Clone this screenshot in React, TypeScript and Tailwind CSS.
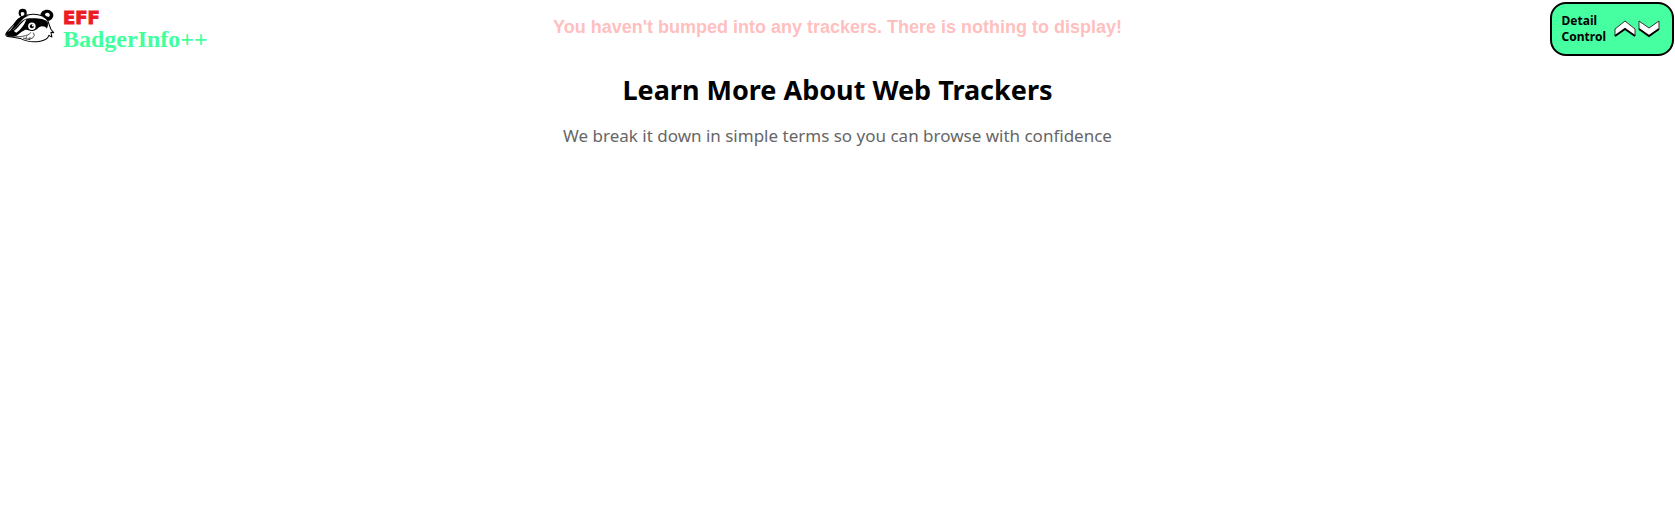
import React from "react";

function BadgerLogo() {
  return (
    <svg viewBox="12 24 150 102" className="h-[35px] w-[51px] shrink-0" aria-hidden="true">
      <circle cx="67" cy="38" r="12" fill="#000" />
      <path d="M61 38q5-6 11 0l-1 9-8 2z" fill="#fff" />
      <path d="M119 46c0-15 19-22 31-14s9 24-8 30z" fill="#000" />
      <path d="M132 42q8-8 14-1 3 6-3 9l-8-3z" fill="#fff" />
      <path
        d="M17 101C22 88 36 80 45 66 56 51 74 43 96 42c22-1 40 8 46 22 3 9 5 15 8 22l8 10-8-1 3 14-9-5c-3 10-14 15-25 17-20 4-43 1-59-8L34 109c-10 0-17-2-17-8z"
        fill="#fff"
        stroke="#000"
        strokeWidth="3"
        strokeLinejoin="round"
      />
      <path d="M39 78c5-15 18-30 36-34l10 2C68 51 59 66 50 77c-7 8-15 13-22 15z" fill="#000" />
      <path
        d="M18 99c4-9 13-7 23-13 12-10 20-25 35-31 22-2 55-3 65 11 1 6 0 13-3 18-5-7-14-9-23-4-5 4-11 12-21 11-11 0-14-6-22-2-12 5-18 15-27 18-10 3-26 1-27-8z"
        fill="#000"
      />
      <path d="M41 91C56 80 62 66 78 56 74 70 62 88 48 96z" fill="#fff" />
      <circle cx="94" cy="77" r="11" fill="#fff" />
      <circle cx="94" cy="77" r="6" fill="#000" />
      <circle cx="97" cy="75" r="3" fill="#fff" />
      <path
        d="M46 108q18 1 29-3 13-2 16-10m7 1q7 9-1 15-9 7-21 4m-8-3 9 2 1-7m4 6 5 4 2-8"
        fill="none"
        stroke="#000"
        strokeWidth="2"
      />
    </svg>
  );
}

function Chevron({ down = false }: { down?: boolean }) {
  return (
    <svg viewBox="0 0 22 18" className="h-[18px] w-[22px]" aria-hidden="true">
      {down ? (
        <>
          <path d="M1 1l10 7 10-7v8l-10 7L1 9z" fill="#fff" stroke="#333" />
          <path d="M1 9l10 7 10-7" fill="none" stroke="#000" strokeWidth="2" />
        </>
      ) : (
        <>
          <path d="M1 9l10-8 10 8v7L11 9 1 16z" fill="#fff" stroke="#333" />
          <path d="M1 16l10-7 10 7" fill="none" stroke="#000" strokeWidth="2" />
        </>
      )}
    </svg>
  );
}

export default function App() {
  return (
    <div className="bg-white">
      <header className="grid grid-cols-[1fr_auto_1fr] items-start">
        <div className="flex gap-2 pl-1">
          <div className="pt-2">
            <BadgerLogo />
          </div>
          <div className="flex flex-col pt-2">
            <span className="h-5 font-['DejaVu_Sans',sans-serif] text-lg leading-5 font-bold text-[#ed1c24] [-webkit-text-stroke:1px_#ed1c24]">
              EFF
            </span>
            <span className="font-['Liberation_Serif',serif] text-2xl leading-[22px] font-bold text-[#43ff9e]">
              BadgerInfo++
            </span>
          </div>
        </div>
        <p className="pt-[13px] font-['Liberation_Sans',sans-serif] text-lg leading-7 font-bold text-[#ffbfbf]">
          You haven't bumped into any trackers. There is nothing to display!
        </p>
        <div className="mt-0.5 mr-px flex h-[54px] items-center gap-2 justify-self-end rounded-2xl border-2 border-black bg-[#46ffa0] pr-3 pl-2.5">
          <span className="font-['Noto_Sans',sans-serif] text-xs leading-4 font-bold text-black">
            Detail
            <br />
            Control
          </span>
          <div className="flex gap-0.5">
            <button type="button" aria-label="More detail">
              <Chevron />
            </button>
            <button type="button" aria-label="Less detail">
              <Chevron down />
            </button>
          </div>
        </div>
      </header>
      <main className="flex flex-col items-center gap-3 pt-4 text-center">
        <h1 className="font-['Noto_Sans',sans-serif] text-[27px] leading-9 font-bold text-black">
          Learn More About Web Trackers
        </h1>
        <p className="pt-0.5 font-['Noto_Sans',sans-serif] text-[17px] leading-7 text-[#666666]">
          We break it down in simple terms so you can browse with confidence
        </p>
      </main>
    </div>
  );
}
